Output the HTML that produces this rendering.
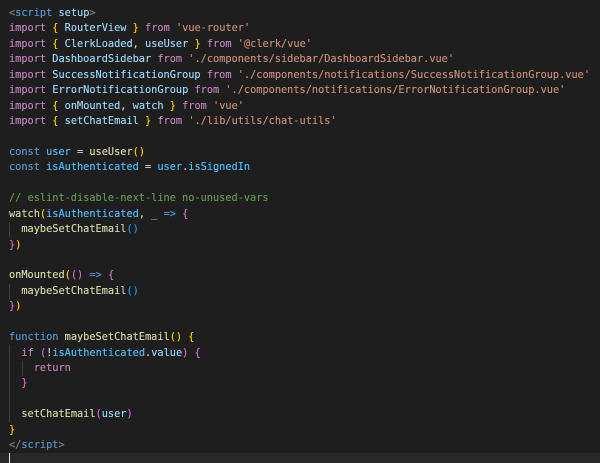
<!DOCTYPE html>
<html>
<head>
<meta charset="utf-8">
<style>
html,body{margin:0;padding:0;background:#1e1e1e;width:600px;height:463px;overflow:hidden}
#e{position:absolute;left:0;top:0;width:600px;height:463px;overflow:hidden;font-family:"DejaVu Sans Mono","Liberation Mono",monospace;font-size:10.28px;filter:blur(.3px)}
#w{position:absolute;left:0;top:.6px;width:600px;height:463px;-webkit-text-stroke:.12px}
.l{position:absolute;left:9px;white-space:pre;height:15.43px;line-height:15.43px;color:#d4d4d4}
.g{position:absolute;width:1px;background:#404040}
.k{color:#c586c0}.v{color:#9cdcfe}.s{color:#ce9178}.f{color:#dcdcaa}.c{color:#4fc1ff}.b{color:#569cd6}.m{color:#6a9955}
.y{color:#ffd700}.p{color:#da70d6}.u{color:#179fff}.t{color:#808080}
</style>
</head>
<body>
<div id="e">
<div style="position:absolute;left:0;top:453px;width:600px;height:10px;background:#282828"></div>
<div class="g" style="left:9px;top:222px;height:15px"></div>
<div class="g" style="left:9px;top:284px;height:15px"></div>
<div class="g" style="left:9px;top:345px;height:77px"></div>
<div class="g" style="left:22px;top:361px;height:15px"></div>
<div style="position:absolute;left:9px;top:453px;width:1px;height:10px;background:#e8e8e8"></div>
<div id="w">
<div class="l" style="top:5.5px"><span class="t">&lt;</span><span class="b">script</span> <span class="v">setup</span><span class="t">&gt;</span></div>
<div class="l" style="top:20.9px"><span class="k">import</span> <span class="y">{</span> <span class="v">RouterView</span> <span class="y">}</span> <span class="k">from</span> <span class="s">'vue-router'</span></div>
<div class="l" style="top:36.4px"><span class="k">import</span> <span class="y">{</span> <span class="v">ClerkLoaded</span>, <span class="v">useUser</span> <span class="y">}</span> <span class="k">from</span> <span class="s">'@clerk/vue'</span></div>
<div class="l" style="top:51.8px"><span class="k">import</span> <span class="v">DashboardSidebar</span> <span class="k">from</span> <span class="s">'./components/sidebar/DashboardSidebar.vue'</span></div>
<div class="l" style="top:67.2px"><span class="k">import</span> <span class="v">SuccessNotificationGroup</span> <span class="k">from</span> <span class="s">'./components/notifications/SuccessNotificationGroup.vue'</span></div>
<div class="l" style="top:82.7px"><span class="k">import</span> <span class="v">ErrorNotificationGroup</span> <span class="k">from</span> <span class="s">'./components/notifications/ErrorNotificationGroup.vue'</span></div>
<div class="l" style="top:98.1px"><span class="k">import</span> <span class="y">{</span> <span class="v">onMounted</span>, <span class="v">watch</span> <span class="y">}</span> <span class="k">from</span> <span class="s">'vue'</span></div>
<div class="l" style="top:113.5px"><span class="k">import</span> <span class="y">{</span> <span class="v">setChatEmail</span> <span class="y">}</span> <span class="k">from</span> <span class="s">'./lib/utils/chat-utils'</span></div>

<div class="l" style="top:144.4px"><span class="b">const</span> <span class="c">user</span> = <span class="f">useUser</span><span class="y">()</span></div>
<div class="l" style="top:159.8px"><span class="b">const</span> <span class="c">isAuthenticated</span> = <span class="c">user</span>.<span class="c">isSignedIn</span></div>

<div class="l" style="top:190.7px"><span class="m">// eslint-disable-next-line no-unused-vars</span></div>
<div class="l" style="top:206.1px"><span class="f">watch</span><span class="y">(</span><span class="c">isAuthenticated</span>, <span class="v">_</span> <span class="b">=&gt;</span> <span class="p">{</span></div>
<div class="l" style="top:221.5px">  <span class="f">maybeSetChatEmail</span><span class="u">()</span></div>
<div class="l" style="top:237px"><span class="p">}</span><span class="y">)</span></div>

<div class="l" style="top:267.8px"><span class="f">onMounted</span><span class="y">(</span><span class="p">()</span> <span class="b">=&gt;</span> <span class="p">{</span></div>
<div class="l" style="top:283.3px">  <span class="f">maybeSetChatEmail</span><span class="u">()</span></div>
<div class="l" style="top:298.7px"><span class="p">}</span><span class="y">)</span></div>

<div class="l" style="top:329.6px"><span class="b">function</span> <span class="f">maybeSetChatEmail</span><span class="y">()</span> <span class="y">{</span></div>
<div class="l" style="top:345px">  <span class="k">if</span> <span class="p">(</span>!<span class="c">isAuthenticated</span>.<span class="v">value</span><span class="p">)</span> <span class="p">{</span></div>
<div class="l" style="top:360.4px">    <span class="k">return</span></div>
<div class="l" style="top:375.9px">  <span class="p">}</span></div>

<div class="l" style="top:406.7px">  <span class="f">setChatEmail</span><span class="p">(</span><span class="v">user</span><span class="p">)</span></div>
<div class="l" style="top:422.2px"><span class="y">}</span></div>
<div class="l" style="top:437.6px"><span class="t">&lt;/</span><span class="b">script</span><span class="t">&gt;</span></div>
</div>
</div>
</body>
</html>
